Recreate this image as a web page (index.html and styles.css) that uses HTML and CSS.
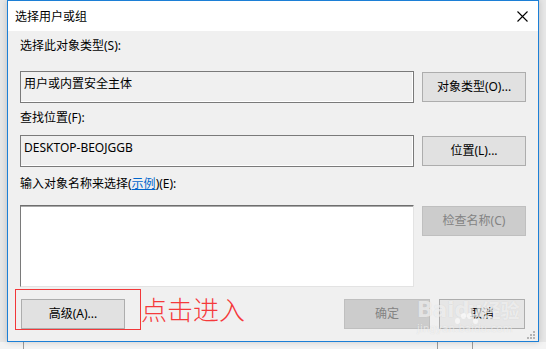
FILE: index.html
```html
<!DOCTYPE html>
<html lang="zh-CN">
<head>
<meta charset="utf-8">
<title>选择用户或组</title>
<link rel="stylesheet" href="styles.css">
</head>
<body>
<div class="desk">
  <div class="win">
    <div class="titlebar">
      <span class="title">选择用户或组</span>
      <svg class="close" width="11" height="11" viewBox="0 0 11 11"><path d="M0.5 0.5L10.5 10.5M10.5 0.5L0.5 10.5" stroke="#000" stroke-width="1.1" fill="none"/></svg>
    </div>
    <div class="content">
      <div class="label l1">选择此对象类型(S):</div>
      <div class="row r1">
        <div class="field">用户或内置安全主体</div>
        <div class="btn">对象类型(O)...</div>
      </div>
      <div class="label l2">查找位置(F):</div>
      <div class="row r2">
        <div class="field latin">DESKTOP-BEOJGGB</div>
        <div class="btn">位置(L)...</div>
      </div>
      <div class="label l3">输入对象名称来选择(<span class="link">示例</span>)(E):</div>
      <div class="row r3">
        <div class="area"></div>
        <div class="btn disabled">检查名称(C)</div>
      </div>
      <div class="bottom">
        <div class="btn adv">高级(A)...</div>
        <div class="right">
          <div class="btn small disabled">确定</div>
          <div class="btn small cancel">取消</div>
        </div>
      </div>
    </div>
    <svg class="grip" width="10" height="9" viewBox="0 0 10 9"><g fill="#b4b4b4"><rect x="7" y="0" width="2" height="2"/><rect x="4" y="3" width="2" height="2"/><rect x="7" y="3" width="2" height="2"/><rect x="1" y="6" width="2" height="2"/><rect x="4" y="6" width="2" height="2"/><rect x="7" y="6" width="2" height="2"/></g></svg>
  </div>
  <div class="redbox"></div>
  <div class="redtext">点击进入</div>
  <div class="watermark">
    <div class="wm-main"><span>Bai</span><span class="paw"><i></i><i></i><i></i><i></i></span><span class="du">du</span><span class="wm-cn">经验</span></div>
    <div class="wm-sub">jingyan.baidu.com</div>
  </div>
</div>
</body>
</html>
```

FILE: styles.css
```css
html, body {
  margin: 0;
  padding: 0;
}
body {
  width: 546px;
  height: 349px;
  overflow: hidden;
  background: #ededed;
  font-family: "Noto Sans", "Noto Sans CJK SC", sans-serif;
  font-size: 12px;
  color: #000;
}
.desk {
  position: relative;
  width: 546px;
  height: 349px;
  background:
    linear-gradient(#9a9a9a, #9a9a9a) 23px 342px / 1px 7px no-repeat,
    linear-gradient(#9a9a9a, #9a9a9a) 437px 342px / 1px 7px no-repeat,
    linear-gradient(#9a9a9a, #9a9a9a) 472px 342px / 1px 7px no-repeat,
    linear-gradient(#f3f3f3, #f3f3f3) 0 342px / 546px 7px no-repeat,
    #e6e6e6;
}
.win {
  position: relative;
  margin-left: 7px;
  width: 532px;
  height: 342px;
  box-sizing: border-box;
  border: 1px solid #1c7fd6;
  background: #f0f0f0;
  box-shadow: 0 0 6px rgba(0,0,0,0.18);
}
.titlebar {
  height: 30px;
  background: #fff;
  display: flex;
  align-items: center;
  justify-content: space-between;
  padding: 0 10px 0 7px;
}
.title {
  line-height: 16px;
  margin-top: 1px;
}
.close {
  display: block;
}
.content {
  padding: 7px 12px 0 12px;
}
.label {
  line-height: 16px;
  height: 16px;
  white-space: nowrap;
}
.l2 { margin-top: 7px; }
.l3 { margin-top: 9px; }
.row {
  display: flex;
  align-items: flex-start;
  gap: 8px;
}
.r1 { margin-top: 17px; }
.r2 { margin-top: 9px; }
.r3 { margin-top: 13px; }
.field {
  width: 394px;
  height: 32px;
  box-sizing: border-box;
  border: 1px solid #7a7a7a;
  box-shadow: inset -1px -1px 0 #fff;
  padding: 4px 3px;
  line-height: 16px;
  background: #f0f0f0;
}
.btn {
  width: 104px;
  height: 30px;
  margin-top: 1px;
  box-sizing: border-box;
  border: 1px solid #adadad;
  background: #e1e1e1;
  display: flex;
  align-items: center;
  justify-content: center;
  white-space: nowrap;
  line-height: 16px;
}
.btn.disabled {
  background: #cccccc;
  border-color: #bfbfbf;
  color: #838383;
}
.area {
  width: 394px;
  height: 82px;
  box-sizing: border-box;
  background: #fff;
  border: 1px solid;
  border-color: #6e6e6e #e3e3e3 #e3e3e3 #7a7a7a;
  box-shadow: inset 0 1px 0 #a8a8a8;
}
.link {
  color: #0066cc;
  text-decoration: underline;
}
.bottom {
  margin-top: 12px;
  display: flex;
  justify-content: space-between;
  padding: 0 1px;
}
.bottom .btn { margin-top: 0; }
.right {
  display: flex;
  gap: 9px;
}
.btn.small { width: 86px; }
.btn.cancel {
  background: #e6e6e6;
}
.grip {
  position: absolute;
  right: 2px;
  bottom: 1px;
}
.redbox {
  position: absolute;
  left: 15px;
  top: 289px;
  width: 126px;
  height: 41px;
  box-sizing: border-box;
  border: 1px solid #f2383a;
}
.redtext {
  position: absolute;
  left: 141px;
  top: 294px;
  font-family: "Noto Sans CJK SC", sans-serif;
  font-weight: 300;
  font-size: 26px;
  line-height: 30px;
  color: #f5393b;
}
.watermark {
  position: absolute;
  left: 417px;
  top: 296px;
  white-space: nowrap;
  color: rgba(255,255,255,0.6);
  text-shadow: 0 0 1px rgba(160,160,160,0.35);
  pointer-events: none;
}
.wm-main {
  display: flex;
  align-items: flex-end;
  font-family: "DejaVu Sans", sans-serif;
  font-weight: bold;
  font-size: 21px;
  line-height: 24px;
  height: 26px;
}
.du {
  letter-spacing: -2px;
}
.wm-cn {
  font-family: "Noto Sans CJK SC", sans-serif;
  font-size: 19px;
  font-weight: bold;
  margin-left: 1px;
}
.paw {
  position: relative;
  width: 0;
}
.paw i {
  position: absolute;
  width: 5px;
  height: 6px;
  background: rgba(255,255,255,0.6);
  border-radius: 50%;
}
.paw i:nth-child(1) { left: 1px; top: -4px; }
.paw i:nth-child(2) { left: 7px; top: -9px; }
.paw i:nth-child(3) { left: 13px; top: -9px; }
.paw i:nth-child(4) { left: 19px; top: -4px; }
.wm-sub {
  font-family: "DejaVu Sans", sans-serif;
  font-size: 10px;
  line-height: 12px;
  letter-spacing: 0.2px;
  margin-top: 1px;
}
```
